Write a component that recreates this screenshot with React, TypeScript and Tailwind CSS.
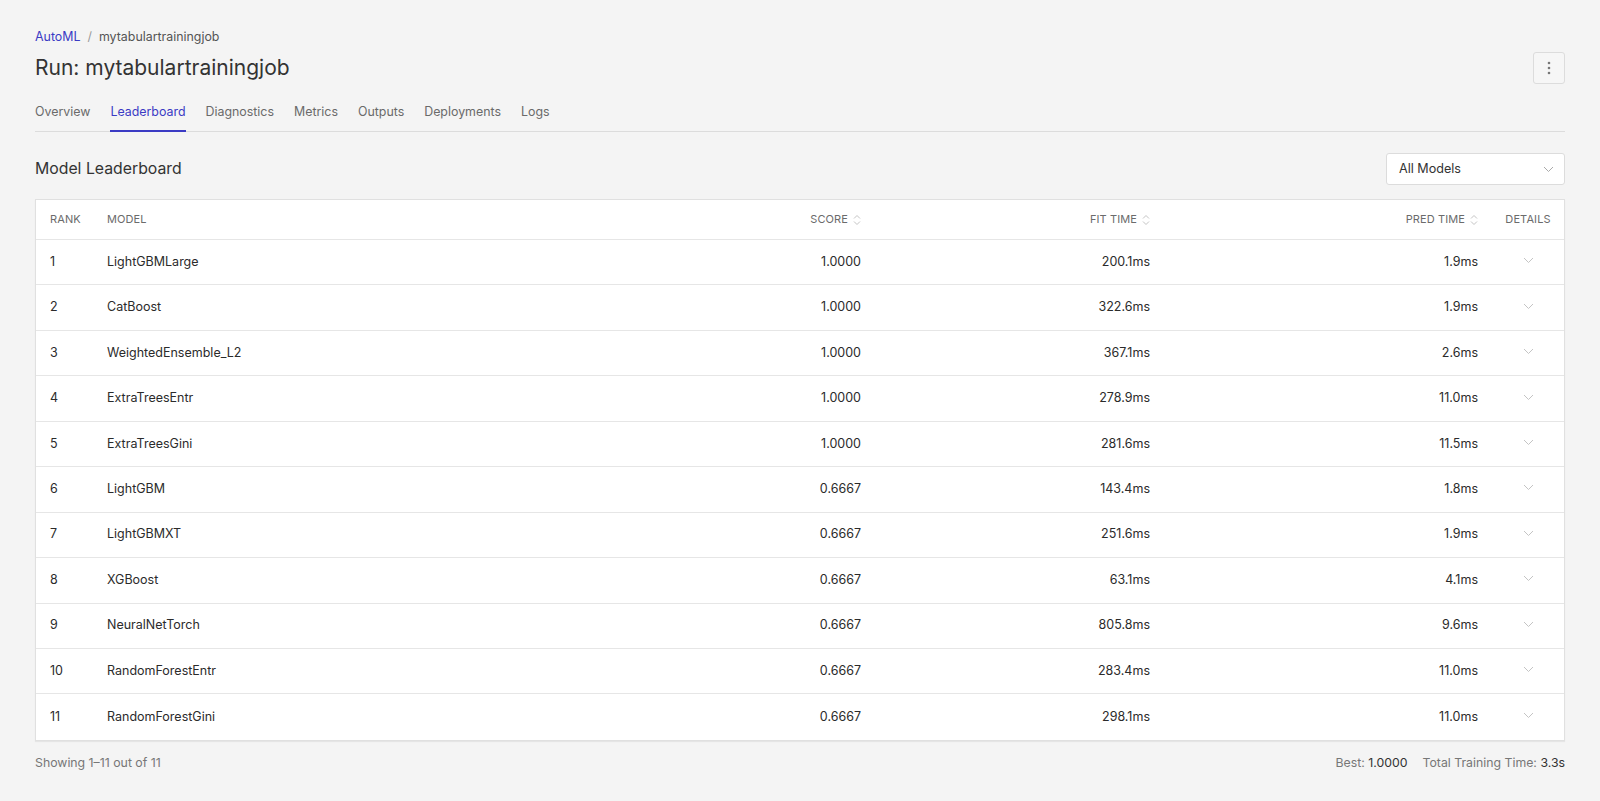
import React from 'react';

type Row = { rank: number; model: string; score: string; fit: string; pred: string };

const rows: Row[] = [
    { rank: 1, model: 'LightGBMLarge', score: '1.0000', fit: '200.1ms', pred: '1.9ms' },
    { rank: 2, model: 'CatBoost', score: '1.0000', fit: '322.6ms', pred: '1.9ms' },
    { rank: 3, model: 'WeightedEnsemble_L2', score: '1.0000', fit: '367.1ms', pred: '2.6ms' },
    { rank: 4, model: 'ExtraTreesEntr', score: '1.0000', fit: '278.9ms', pred: '11.0ms' },
    { rank: 5, model: 'ExtraTreesGini', score: '1.0000', fit: '281.6ms', pred: '11.5ms' },
    { rank: 6, model: 'LightGBM', score: '0.6667', fit: '143.4ms', pred: '1.8ms' },
    { rank: 7, model: 'LightGBMXT', score: '0.6667', fit: '251.6ms', pred: '1.9ms' },
    { rank: 8, model: 'XGBoost', score: '0.6667', fit: '63.1ms', pred: '4.1ms' },
    { rank: 9, model: 'NeuralNetTorch', score: '0.6667', fit: '805.8ms', pred: '9.6ms' },
    { rank: 10, model: 'RandomForestEntr', score: '0.6667', fit: '283.4ms', pred: '11.0ms' },
    { rank: 11, model: 'RandomForestGini', score: '0.6667', fit: '298.1ms', pred: '11.0ms' },
];

const tabs = ['Overview', 'Leaderboard', 'Diagnostics', 'Metrics', 'Outputs', 'Deployments', 'Logs'];

const gridCols = 'grid grid-cols-[57px_482px_300px_289px_328px_1fr]';

// little up/down arrows next to sortable headers
const SortIcon = () => (
    <svg width="8" height="12" viewBox="0 0 8 12" fill="none" stroke="#c4c4c4" strokeWidth="1" className="ml-[5px]">
        <path d="M1 4.5 L4 1.5 L7 4.5" />
        <path d="M1 7.5 L4 10.5 L7 7.5" />
    </svg>
);

const ChevronDown = ({ color = '#c4c4c4' }: { color?: string }) => (
    <svg width="11" height="7" viewBox="0 0 11 7" fill="none" stroke={color} strokeWidth="1">
        <path d="M1 1 L5.5 5.5 L10 1" />
    </svg>
);

const App = () => {
    return (
        <div
            className="min-h-screen bg-[#f4f4f4] px-[35px] pt-[27px] pb-8 text-[#2b2b2b]"
            style={{ fontFamily: 'Inter, "Noto Sans", sans-serif' }}
        >
            {/* Breadcrumb */}
            <div className="flex items-center text-[12.4px] leading-5">
                <span className="text-[#3b3bc4]">AutoML</span>
                <span className="mx-[7px] text-[#9a9a9a]">/</span>
                <span className="text-[#555]">mytabulartrainingjob</span>
            </div>

            {/* Title */}
            <div className="mt-[5px] flex items-center justify-between">
                <h1 className="text-[21px] leading-8 text-[#333]">Run: mytabulartrainingjob</h1>
                <button className="flex h-8 w-8 items-center justify-center rounded-[3px] border border-[#dcdcdc] bg-[#f6f6f6]">
                    <svg width="4" height="14" viewBox="0 0 4 14" fill="#777">
                        <circle cx="2" cy="2" r="1.3" />
                        <circle cx="2" cy="7" r="1.3" />
                        <circle cx="2" cy="12" r="1.3" />
                    </svg>
                </button>
            </div>

            {/* Tabs */}
            <nav className="mt-[18px] flex gap-5 border-b border-[#dcdcdc]">
                {tabs.map((t) => (
                    <div
                        key={t}
                        className={
                            t === 'Leaderboard'
                                ? '-mb-px border-b-2 border-[#3b3bc4] pb-[8px] text-[12.4px] leading-5 text-[#3b3bc4]'
                                : '-mb-px border-b-2 border-transparent pb-[8px] text-[12.4px] leading-5 text-[#6a6a6a]'
                        }
                    >
                        {t}
                    </div>
                ))}
            </nav>

            {/* Section header */}
            <div className="mt-[21px] flex items-center justify-between">
                <h2 className="text-[15.8px] leading-6 text-[#333]">Model Leaderboard</h2>
                <div className="flex h-8 w-[179px] items-center justify-between rounded-[3px] border border-[#dcdcdc] bg-white pl-3 pr-[10px] text-[12.6px] text-[#333]">
                    <span>All Models</span>
                    <ChevronDown color="#aaa" />
                </div>
            </div>

            {/* Table */}
            <div className="mt-[14px] border border-[#e0e0e0] bg-white shadow-[0_1px_1px_rgba(0,0,0,0.06)]">
                <div className={`${gridCols} h-[40px] items-center border-b border-[#e6e6e6] text-[11px] uppercase tracking-[0.01em] text-[#6b6b6b]`}>
                    <div className="pl-[14px]">Rank</div>
                    <div className="pl-[14px]">Model</div>
                    <div className="flex items-center justify-end pr-[14px]">
                        Score
                        <SortIcon />
                    </div>
                    <div className="flex items-center justify-end pr-[14px]">
                        Fit Time
                        <SortIcon />
                    </div>
                    <div className="flex items-center justify-end pr-[14px]">
                        Pred Time
                        <SortIcon />
                    </div>
                    <div className="text-center">Details</div>
                </div>

                {rows.map((r, i) => (
                    <div
                        key={r.rank}
                        className={`${gridCols} h-[45.45px] items-center text-[12.5px] text-[#2b2b2b] ${
                            i < rows.length - 1 ? 'border-b border-[#e6e6e6]' : ''
                        }`}
                    >
                        <div className="pl-[14px]">{r.rank}</div>
                        <div className="pl-[14px]">{r.model}</div>
                        <div className="pr-[14px] text-right">{r.score}</div>
                        <div className="pr-[14px] text-right">{r.fit}</div>
                        <div className="pr-[14px] text-right">{r.pred}</div>
                        <div className="flex justify-center pb-[3px]">
                            <ChevronDown />
                        </div>
                    </div>
                ))}
            </div>

            {/* Footer */}
            <div className="mt-[12px] flex items-center justify-between text-[12.3px] leading-5 text-[#777]">
                <span>Showing 1–11 out of 11</span>
                <div className="flex gap-[15px]">
                    <span>
                        Best: <span className="text-[#333]">1.0000</span>
                    </span>
                    <span>
                        Total Training Time: <span className="text-[#333]">3.3s</span>
                    </span>
                </div>
            </div>
        </div>
    );
};

export default App;
